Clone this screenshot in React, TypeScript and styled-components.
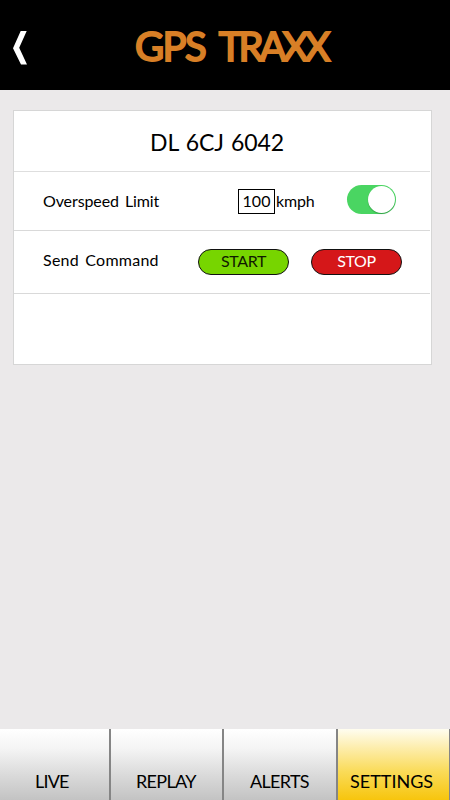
import React, { useState } from "react";
import styled, { createGlobalStyle } from "styled-components";

const GlobalStyle = createGlobalStyle`
  * { box-sizing: border-box; }
  body { margin: 0; background: #ebe9ea; }
`;

const Screen = styled.div`
  display: flex;
  flex-direction: column;
  width: 450px;
  height: 800px;
  overflow: hidden;
  background: #ebe9ea;
  color: #000;
  font-family: Lato, "Open Sans", sans-serif;
  font-size: 16px;
  white-space: nowrap;
`;

const Header = styled.header`
  display: flex;
  align-items: center;
  height: 90px;
  padding: 5px 0 0 13px;
  background: #000;
`;

const BackButton = styled.button`
  display: flex;
  width: 14px;
  height: 34px;
  padding: 0;
  border: 0;
  background: none;
`;

const Brand = styled.h1`
  margin: 0 0 3px 108px;
  font-size: 40px;
  line-height: 48px;
  font-weight: 400;
  letter-spacing: -1.6px;
  word-spacing: 5px;
  color: #d87f26;
  -webkit-text-stroke: 2px #d87f26;
  stroke-linejoin: round;
`;

const BrandTail = styled.span`
  letter-spacing: -4px;
`;

const Main = styled.main`
  flex: 1;
  padding: 20px 18px 0 13px;
`;

const Card = styled.section`
  height: 255px;
  padding-right: 1px;
  border: 1px solid #d6d6d6;
  background: #fff;
`;

const Plate = styled.h2`
  display: flex;
  align-items: center;
  height: 61px;
  margin: 0;
  padding: 2px 0 0 136px;
  border-bottom: 1px solid #dedede;
  font-size: 23px;
  font-weight: 400;
  letter-spacing: -0.1px;
  word-spacing: 1.5px;
`;

const Row = styled.div<{ $height: number }>`
  display: flex;
  align-items: center;
  height: ${(p) => p.$height}px;
  padding-left: 29px;
  border-bottom: 1px solid #d9d9d9;
`;

const Label = styled.span<{ $width: number; $spacing: number; $lift: number }>`
  width: ${(p) => p.$width}px;
  margin-bottom: ${(p) => p.$lift}px;
  letter-spacing: ${(p) => p.$spacing}px;
  word-spacing: 2px;
`;

const LimitInput = styled.input`
  width: 37px;
  height: 25px;
  margin-top: 1px;
  padding: 0 0 2px;
  border: 1px solid #000;
  border-radius: 0;
  background: #fff;
  color: #000;
  font: inherit;
  text-align: center;
`;

const Unit = styled.span`
  width: 72px;
  margin-bottom: 2px;
  padding-left: 1px;
  letter-spacing: -0.2px;
`;

const Toggle = styled.button<{ $on: boolean }>`
  display: flex;
  justify-content: ${(p) => (p.$on ? "flex-end" : "flex-start")};
  width: 49px;
  height: 29px;
  margin-bottom: 3px;
  padding: 1px;
  border: 0;
  border-radius: 15px;
  background: ${(p) => (p.$on ? "#4ad562" : "#ccc")};
`;

const Knob = styled.span`
  width: 27px;
  height: 27px;
  border-radius: 50%;
  background: #fff;
  box-shadow: 0 1px 1px rgba(0, 70, 20, 0.35);
`;

const CommandButton = styled.button<{ $stop?: boolean }>`
  width: 91px;
  height: 26px;
  margin: 0 22px 1px 0;
  padding: 0 0 1px;
  border: 1px solid #111;
  border-radius: 13px;
  background: ${(p) => (p.$stop ? "#d51719" : "#77d500")};
  color: ${(p) => (p.$stop ? "#fff" : "#101a00")};
  font: inherit;
  letter-spacing: -0.4px;
  line-height: 22px;
`;

const TabBar = styled.nav`
  display: grid;
  grid-template-columns: 111px 113px 114px 112px;
  height: 71px;
`;

const Tab = styled.button<{ $active?: boolean; $shift: number; $spacing: number }>`
  display: flex;
  align-items: flex-end;
  padding: 0 0 8px ${(p) => p.$shift}px;
  border: 0;
  border-right: ${(p) => (p.$active ? 1 : 2)}px solid #858585;
  background: ${(p) =>
    p.$active
      ? "linear-gradient(#fffdf0 0%, #fdeeb0 25%, #fadb58 60%, #f7c50d 100%)"
      : "linear-gradient(#fff 0%, #f4f4f4 28%, #dadada 65%, #c3c3c3 100%)"};
  color: #000;
  font: inherit;
  font-size: 18px;
  line-height: 22px;
  letter-spacing: ${(p) => p.$spacing}px;
`;

const tabs = [
  { name: "LIVE", shift: 35, spacing: -0.8 },
  { name: "REPLAY", shift: 25, spacing: -0.7 },
  { name: "ALERTS", shift: 26, spacing: -0.7 },
  { name: "SETTINGS", shift: 12, spacing: 0 },
];

export default function App() {
  const [on, setOn] = useState(true);
  const [limit, setLimit] = useState("100");
  const [active, setActive] = useState("SETTINGS");
  return (
    <Screen>
      <GlobalStyle />
      <Header>
        <BackButton aria-label="Back">
          <svg width="14" height="34" viewBox="0 0 14 34">
            <path d="M7.7 0H13.7L6.2 16.7L14 33.5H8L0 17.2Z" fill="#fff" />
          </svg>
        </BackButton>
        <Brand>
          GPS <BrandTail>TRAXX</BrandTail>
        </Brand>
      </Header>
      <Main>
        <Card>
          <Plate>DL 6CJ 6042</Plate>
          <Row $height={59}>
            <Label $width={195} $spacing={-0.1} $lift={2}>Overspeed Limit</Label>
            <LimitInput aria-label="Speed limit" value={limit} onChange={(e) => setLimit(e.target.value)} />
            <Unit>kmph</Unit>
            <Toggle $on={on} aria-label="Overspeed limit" onClick={() => setOn(!on)}>
              <Knob />
            </Toggle>
          </Row>
          <Row $height={63}>
            <Label $width={155} $spacing={0.25} $lift={6}>Send Command</Label>
            <CommandButton>START</CommandButton>
            <CommandButton $stop>STOP</CommandButton>
          </Row>
        </Card>
      </Main>
      <TabBar>
        {tabs.map((t) => (
          <Tab
            key={t.name}
            $active={t.name === active}
            $shift={t.shift}
            $spacing={t.spacing}
            onClick={() => setActive(t.name)}
          >
            {t.name}
          </Tab>
        ))}
      </TabBar>
    </Screen>
  );
}
